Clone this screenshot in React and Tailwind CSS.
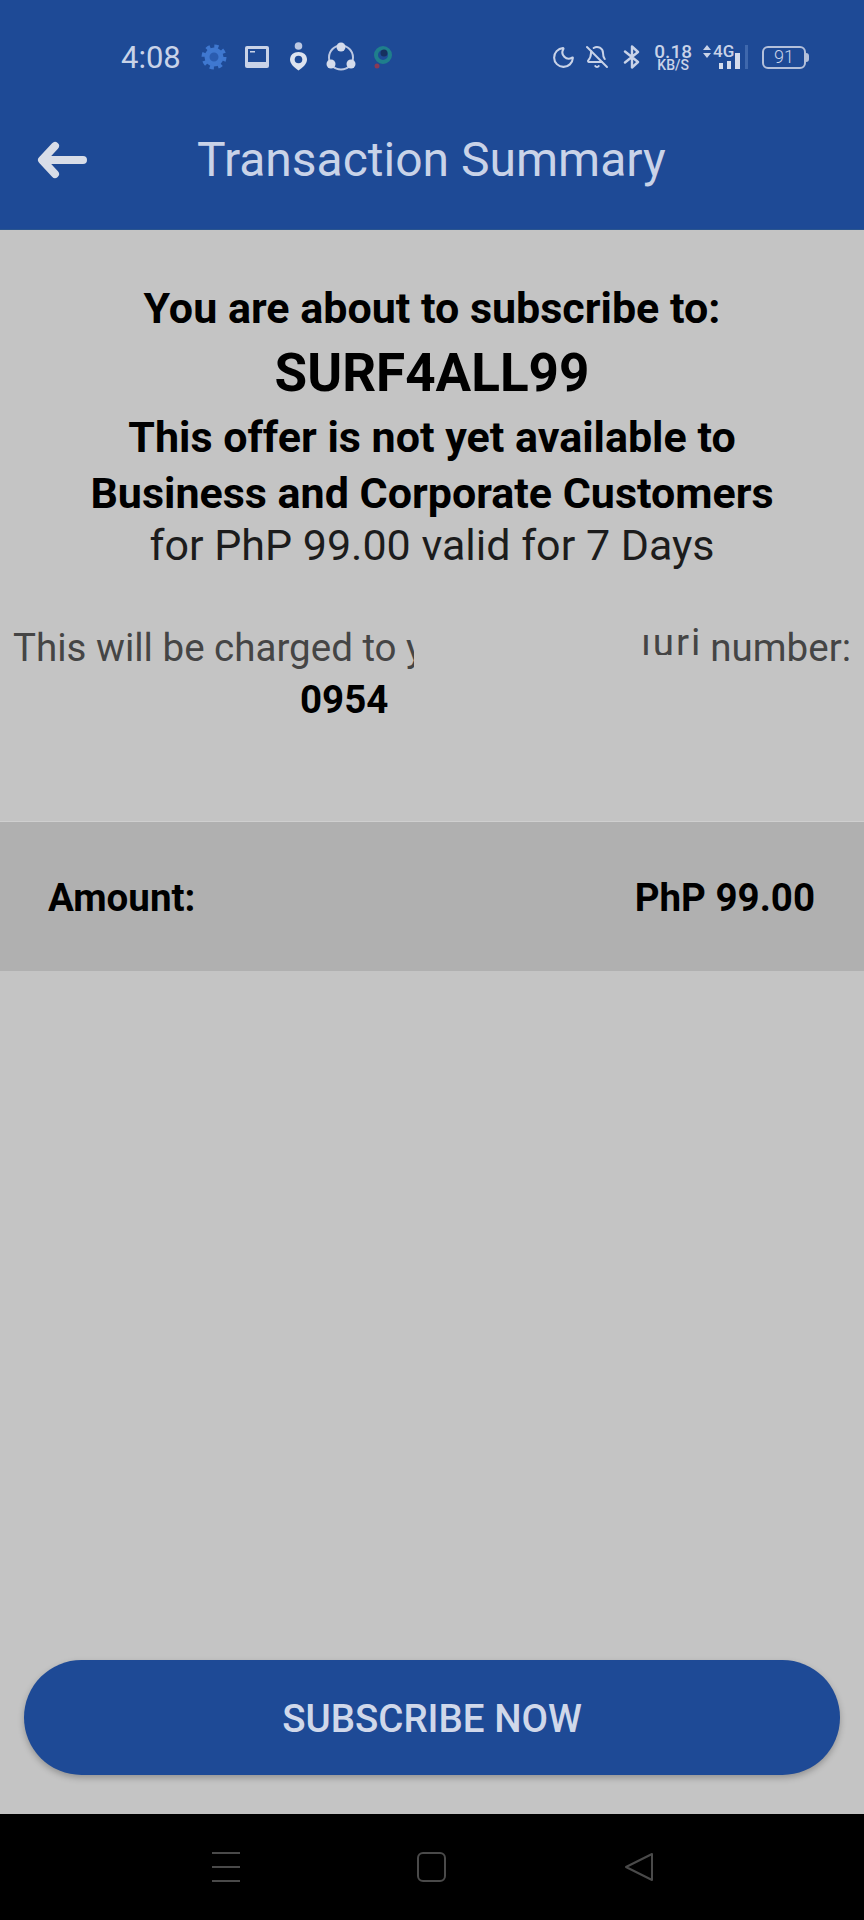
import { Moon, BellOff } from 'lucide-react';

function GearIcon() {
    return (
        <svg width="26" height="26" viewBox="0 0 26 26" fill="none">
            <circle cx="13" cy="13" r="7" stroke="#3f78d0" strokeWidth="5" fill="#2a5cb0" />
            <circle cx="13" cy="13" r="10.500" stroke="#3f78d0" strokeWidth="4" strokeDasharray="4.100 4.147" />
        </svg>
    );
}

function MonitorIcon() {
    return (
        <svg width="26" height="24" viewBox="0 0 26 24">
            <rect x="1" y="1" width="24" height="22" rx="2" fill="#c9d3e8" />
            <rect x="4" y="4" width="18" height="13" fill="#1e4a96" />
            <rect x="6" y="6" width="5" height="1.500" fill="#c9d3e8" />
        </svg>
    );
}

function PinIcon() {
    return (
        <svg width="19" height="30" viewBox="0 0 19 30">
            <circle cx="9.500" cy="4" r="3.800" fill="#bcc8e2" />
            <path d="M9.500 10c5 0 8.500 3 8.500 7.500 0 4-4 8-8.500 11C5 25.500 1 21.500 1 17.500 1 13 4.500 10 9.500 10z" fill="#dde3ef" />
            <circle cx="9.500" cy="17.500" r="3.800" fill="#1e4a96" />
        </svg>
    );
}

function ShareIcon() {
    return (
        <svg width="32" height="30" viewBox="0 0 32 30" fill="none">
            <circle cx="16" cy="15.500" r="12" stroke="#bcc8e2" strokeWidth="2" />
            <circle cx="16" cy="5" r="4.500" fill="#d5dcec" />
            <circle cx="6" cy="22" r="4.500" fill="#d5dcec" />
            <circle cx="26" cy="22" r="4.500" fill="#d5dcec" />
        </svg>
    );
}

function AppIcon() {
    return (
        <svg width="20" height="24" viewBox="0 0 20 24" fill="none">
            <circle cx="11" cy="10" r="7" stroke="#1f7f8c" strokeWidth="4" />
            <circle cx="12" cy="8" r="3.500" fill="#16305f" />
            <circle cx="5" cy="21" r="2.500" fill="#8a3a55" />
        </svg>
    );
}

function BluetoothIcon() {
    return (
        <svg width="18" height="24" viewBox="0 0 18 24" fill="none">
            <path d="M2 6.500 15 17l-6 5.500v-21l6 5.500L2 17.500" stroke="#c9d3e8" strokeWidth="2.400" strokeLinejoin="round" strokeLinecap="round" />
        </svg>
    );
}

function SignalIcon() {
    return (
        <div className="flex items-end gap-[5px]">
            <div className="flex flex-col w-[37px]">
                <div className="flex items-center gap-[2px] h-[13px]">
                    <svg width="8" height="13" viewBox="0 0 8 13">
                        <path d="M4 0 8 5H0zM4 13 0 8h8z" fill="#c9d3e8" />
                    </svg>
                    <span className="text-[17px] leading-[13px] font-medium">4G</span>
                </div>
                <div className="flex items-end justify-end gap-[4px] h-[16px] -mt-[5px]">
                    <div className="w-[4px] h-[6px] bg-[#d5dcec]" />
                    <div className="w-[4px] h-[8px] bg-[#d5dcec]" />
                    <div className="w-[5px] h-[16px] bg-[#d5dcec]" />
                </div>
            </div>
            <div className="w-[3px] h-[24px] bg-[#3f68ad]" />
        </div>
    );
}

function StatusBar() {
    return (
        <div className="flex items-center h-[114px] pl-[121px] pr-[55px] text-[#c9d3e8]">
            <span className="text-[31px] leading-none w-[80px]">4:08</span>
            <GearIcon />
            <div className="ml-[17px]"><MonitorIcon /></div>
            <div className="ml-[19px]"><PinIcon /></div>
            <div className="ml-[17px]"><ShareIcon /></div>
            <div className="ml-[15px]"><AppIcon /></div>
            <div className="flex-1" />
            <Moon size={25} strokeWidth={2} />
            <BellOff size={24} strokeWidth={2} className="ml-[9px]" />
            <div className="ml-[14px]"><BluetoothIcon /></div>
            <div className="ml-[13px] flex flex-col items-center font-medium">
                <span className="text-[19px] leading-[15px]">0.18</span>
                <span className="text-[14px] leading-[12px]">KB/S</span>
            </div>
            <div className="ml-[11px]"><SignalIcon /></div>
            <div className="ml-[14px] flex items-center">
                <div className="w-[44px] h-[23px] rounded-[6px] border-2 border-[#b4c0da] flex items-center justify-center text-[18px] font-light leading-none">91</div>
                <div className="w-[3px] h-[9px] bg-[#b4c0da] rounded-r-sm" />
            </div>
        </div>
    );
}

function Header() {
    return (
        <header className="h-[230px] shrink-0 bg-[#1e4a96] border-b border-[#2a558f]">
            <StatusBar />
            <div className="flex items-center h-[92px] pl-[36px]">
                <svg width="52" height="40" viewBox="0 0 52 40" fill="none">
                    <path d="M19 6 6 20l13 14M7 20h40" stroke="#d8dde8" strokeWidth="8" strokeLinecap="round" strokeLinejoin="round" />
                </svg>
                <h1 className="ml-[109px] text-[48px] leading-none text-[#c9d3e8]">Transaction Summary</h1>
            </div>
        </header>
    );
}

function Summary() {
    return (
        <section className="flex flex-col items-center text-center text-black pt-[51px]">
            <p className="text-[43px] leading-[54px] font-bold">You are about to subscribe to:</p>
            <p className="text-[53px] leading-[64px] font-bold mt-[6px]">SURF4ALL99</p>
            <p className="text-[43px] leading-[56px] font-bold mt-[4px]">This offer is not yet available to<br />Business and Corporate Customers</p>
            <p className="text-[43px] leading-[48px] text-[#1c1c1c]">for PhP 99.00 valid for 7 Days</p>
        </section>
    );
}

function ChargeNote() {
    return (
        <section className="mt-[53px] px-[13px]">
            <div className="flex justify-between text-[38.5px] leading-[52px] text-[#454545]">
                <div className="w-[401px] h-[52px] overflow-hidden whitespace-nowrap">This will be charged to your</div>
                <div className="flex items-start gap-[8px] whitespace-nowrap">
                    <span className="h-[33px] overflow-hidden leading-[42px] tracking-[2px]">ıuri</span>
                    <span>number:</span>
                </div>
            </div>
            <p className="ml-[287px] text-[38.5px] leading-[52px] font-bold text-black">0954</p>
        </section>
    );
}

function AmountRow() {
    return (
        <div className="mt-[95px] h-[150px] pt-[2px] flex items-center justify-between pl-[48px] pr-[49px] bg-[#b0b0b0] border-t border-[#cfcfcf] text-[38.5px] font-bold text-black">
            <span>Amount:</span>
            <span>PhP 99.00</span>
        </div>
    );
}

function NavBar() {
    return (
        <nav className="h-[106px] shrink-0 bg-black flex items-start pt-[38px]">
            <div className="ml-[212px] flex flex-col justify-between w-[28px] h-[30px]">
                <div className="h-[2px] bg-[#4a4a4a]" />
                <div className="h-[2px] bg-[#4a4a4a]" />
                <div className="h-[2px] bg-[#4a4a4a]" />
            </div>
            <div className="ml-[177px] w-[29px] h-[30px] rounded-[6px] border-2 border-[#4a4a4a]" />
            <svg className="ml-[178px]" width="30" height="30" viewBox="0 0 30 30" fill="none">
                <path d="M2 15 28 2v26z" stroke="#4a4a4a" strokeWidth="2" strokeLinejoin="round" />
            </svg>
        </nav>
    );
}

export default function App() {
    return (
        <div className="w-[864px] h-[1920px] flex flex-col bg-[#c4c4c4] font-['Roboto',sans-serif] overflow-hidden">
            <Header />
            <main className="flex-1 flex flex-col">
                <Summary />
                <ChargeNote />
                <AmountRow />
                <div className="flex-1" />
                <div className="px-[24px] pb-[39px]">
                    <button className="w-full h-[115px] pt-[2px] rounded-full bg-[#1e4a96] text-[#d0d8ea] text-[38.5px] font-medium shadow-[0_3px_6px_rgba(0,0,0,0.25)]">
                        SUBSCRIBE NOW
                    </button>
                </div>
            </main>
            <NavBar />
        </div>
    );
}
